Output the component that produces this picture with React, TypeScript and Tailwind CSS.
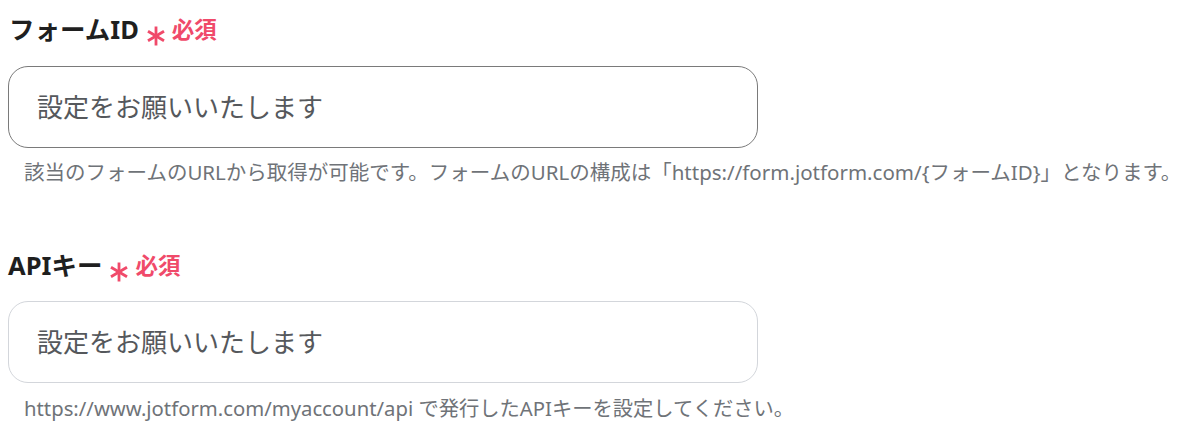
import React from "react";

const FONT = "font-['Noto_Sans','Noto_Sans_CJK_JP',sans-serif]";

function Asterisk() {
  return (
    <svg width="18" height="20" viewBox="0 0 18 20" className="mt-[12px]">
      <g stroke="#f04a6a" strokeWidth="2.8" strokeLinecap="butt">
        <line x1="9" y1="0.5" x2="9" y2="19.5" />
        <line x1="1" y1="5.2" x2="17" y2="14.8" />
        <line x1="1" y1="14.8" x2="17" y2="5.2" />
      </g>
    </svg>
  );
}

function Label({ text, className }: { text: string; className?: string }) {
  return (
    <div className={`flex items-center h-[32px] ${className ?? ""}`}>
      <span className="text-[25.5px] font-bold text-[#1f1f1f] leading-none">{text}</span>
      <span className="ml-[8px] flex items-center">
        <Asterisk />
      </span>
      <span className="ml-[7px] text-[22.5px] font-bold text-[#f04a6a] leading-none">必須</span>
    </div>
  );
}

export default function App() {
  return (
    <div className={`w-[1187px] h-[443px] bg-white pl-[8px] pt-[14px] overflow-hidden ${FONT}`}>
      <Label text="フォームID" className="pl-[1px]" />
      <input
        placeholder="設定をお願いいたします"
        className="mt-[20px] block w-[750px] h-[82px] rounded-[20px] border border-[#7a7a7a] pl-[28px] text-[26px] text-[#333] placeholder:text-[#55585c] outline-none bg-white"
      />
      <div className="mt-[10px] h-[28px] flex items-center pl-[16px] text-[20.5px] text-[#6f7378] whitespace-nowrap">
        該当のフォームのURLから取得が可能です。フォームのURLの構成は「https://form.jotform.com/{"{"}フォームID{"}"}」となります。
      </div>
      <Label text="APIキー" className="mt-[64px]" />
      <input
        placeholder="設定をお願いいたします"
        className="mt-[19px] block w-[750px] h-[82px] rounded-[20px] border border-[#d3d6db] pl-[28px] text-[26px] text-[#333] placeholder:text-[#55585c] outline-none bg-white"
      />
      <div className="mt-[11px] h-[28px] flex items-center pl-[16px] text-[20.3px] text-[#6f7378] whitespace-nowrap">
        https://www.jotform.com/myaccount/api で発行したAPIキーを設定してください。
      </div>
    </div>
  );
}
